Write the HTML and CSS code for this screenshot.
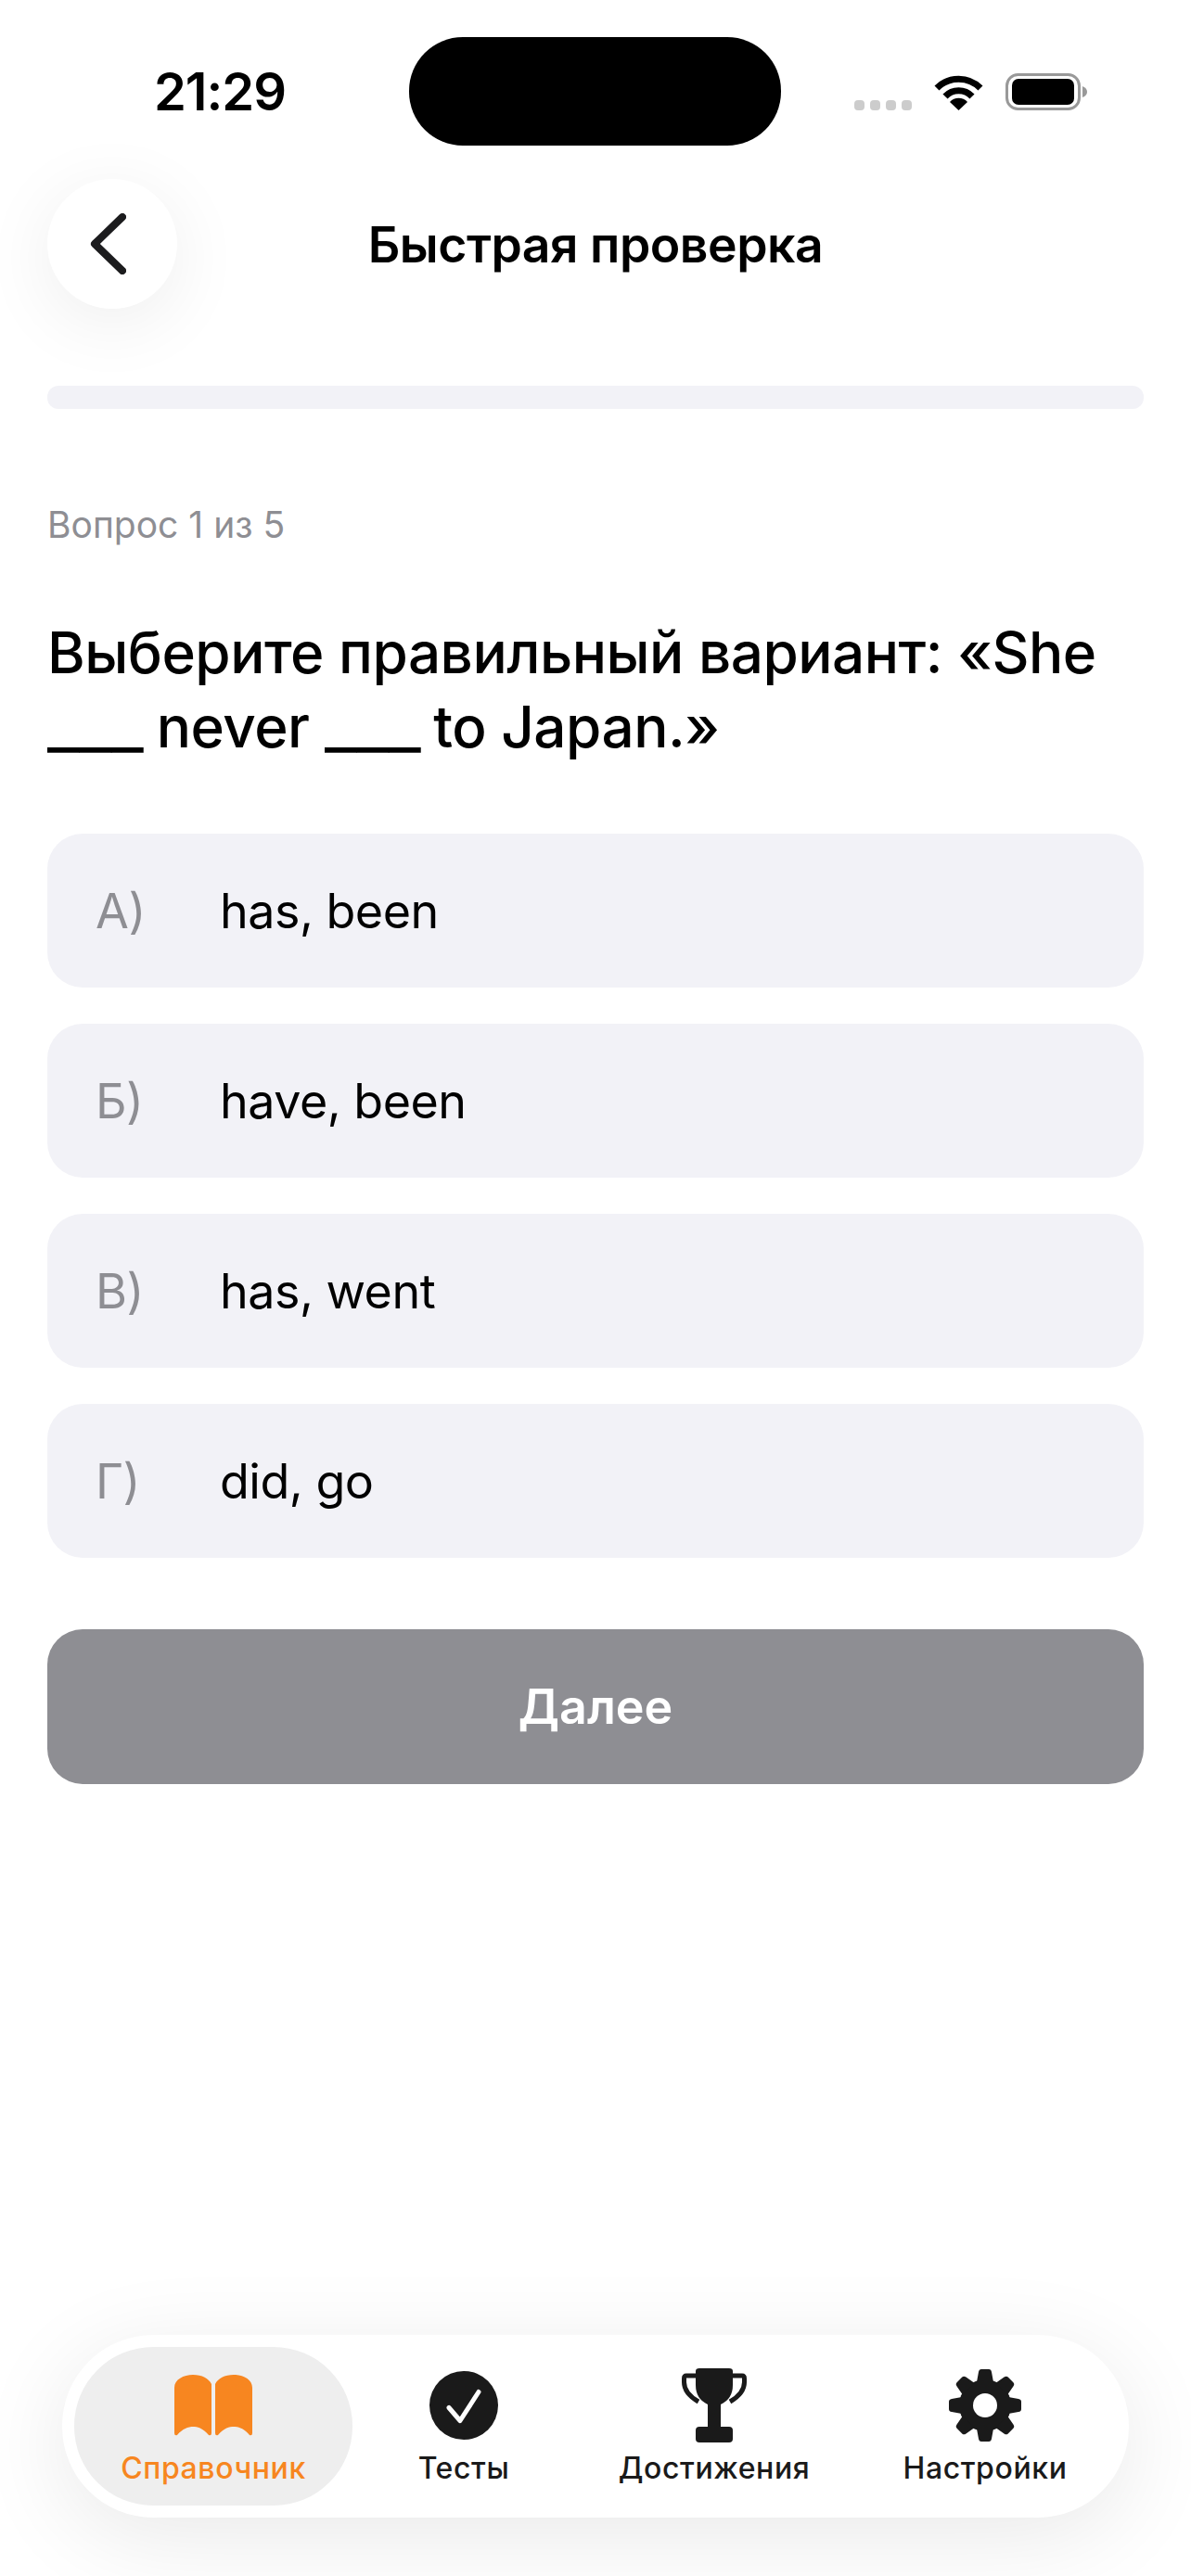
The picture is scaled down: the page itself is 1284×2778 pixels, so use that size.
FILE: index.html
```html
<!DOCTYPE html>
<html lang="ru">
<head>
    <meta charset="UTF-8">
    <meta name="viewport" content="width=device-width, initial-scale=1.0">
    <title>Быстрая проверка</title>
    <link rel="stylesheet" href="styles.css">
</head>
<body>
    <div class="page">
        <!-- Status bar -->
        <div class="status-bar">
            <span class="time">21:29</span>
            <div class="island"></div>
            <div class="status-icons">
                <div class="signal-dots"><i></i><i></i><i></i><i></i></div>
                <svg class="wifi" width="53" height="40" viewBox="0 0 53 40">
                    <path d="M3 16 A33 33 0 0 1 50 16" fill="none" stroke="#000" stroke-width="7"/>
                    <path d="M12 25 A20 20 0 0 1 41 25" fill="none" stroke="#000" stroke-width="7"/>
                    <path d="M26.5 40 L17 31 A13 13 0 0 1 36 31 Z" fill="#000"/>
                </svg>
                <svg class="battery" width="88" height="40" viewBox="0 0 88 40">
                    <rect x="1.5" y="1.5" width="78" height="37" rx="12" fill="none" stroke="#999" stroke-width="3"/>
                    <rect x="7" y="6" width="67" height="28" rx="7" fill="#000"/>
                    <path d="M83 14 Q88 16 88 20 Q88 24 83 26 Z" fill="#999"/>
                </svg>
            </div>
        </div>

        <!-- Header -->
        <header class="top-bar">
            <button class="back-btn">
                <svg width="40" height="66" viewBox="0 0 40 66">
                    <path d="M36 4 L6 33 L36 62" fill="none" stroke="#1c1c1e" stroke-width="8" stroke-linecap="round" stroke-linejoin="round"/>
                </svg>
            </button>
            <h1>Быстрая проверка</h1>
        </header>

        <div class="progress"></div>

        <!-- Question -->
        <main class="quiz">
            <p class="counter">Вопрос 1 из 5</p>
            <h2 class="question">Выберите правильный вариант: «She <span class="blank">___</span> never <span class="blank">___</span> to Japan.»</h2>
            <div class="options">
                <div class="option"><span class="letter">А)</span><span>has, been</span></div>
                <div class="option"><span class="letter">Б)</span><span>have, been</span></div>
                <div class="option"><span class="letter">В)</span><span>has, went</span></div>
                <div class="option"><span class="letter">Г)</span><span>did, go</span></div>
            </div>
            <button class="next-btn">Далее</button>
        </main>

        <!-- Tab bar -->
        <nav class="tab-bar">
            <a class="tab active">
                <svg width="84" height="66" viewBox="0 0 84 66">
                    <path d="M0 14 C0 5 10 0 20 0 C30 0 37 4 40 10 V63 Q40 66 37 65 C30 57 25 56 20 56 C15 56 9 58 3 65 Q0 66 0 63 Z" fill="#f78620"/>
                    <path d="M84 14 C84 5 74 0 64 0 C54 0 47 4 44 10 V63 Q44 66 47 65 C54 57 59 56 64 56 C69 56 75 58 81 65 Q84 66 84 63 Z" fill="#f78620"/>
                </svg>
                <span>Справочник</span>
            </a>
            <a class="tab">
                <svg width="74" height="75" viewBox="0 0 74 75">
                    <circle cx="37" cy="37.5" r="37" fill="#1a1a1a"/>
                    <path d="M21 40 L33 54 L53 23" fill="none" stroke="#fff" stroke-width="5" stroke-linecap="round" stroke-linejoin="round"/>
                </svg>
                <span>Тесты</span>
            </a>
            <a class="tab">
                <svg width="70" height="80" viewBox="0 0 70 80">
                    <path d="M15 3 Q15 0 19 0 H51 Q55 0 55 3 V18 Q55 33 42 39 V63 H28 V39 Q15 33 15 18 Z" fill="#1a1a1a"/>
                    <path d="M15 8 H5 Q2.500 8 2.500 11 V15 Q2.500 27 18 36" fill="none" stroke="#1a1a1a" stroke-width="5"/>
                    <path d="M55 8 H65 Q67.500 8 67.500 11 V15 Q67.500 27 52 36" fill="none" stroke="#1a1a1a" stroke-width="5"/>
                    <rect x="15" y="63" width="40" height="17" rx="4" fill="#1a1a1a"/>
                </svg>
                <span>Достижения</span>
            </a>
            <a class="tab">
                <svg width="78" height="78" viewBox="0 0 78 78">
                    <circle cx="39" cy="39" r="28" fill="#1a1a1a"/>
                    <g fill="#1a1a1a">
                        <path id="tooth" d="M30 14 L32 3 Q32.500 0 35 0 H43 Q45.500 0 46 3 L48 14 Z"/>
                        <use href="#tooth" transform="rotate(45 39 39)"/>
                        <use href="#tooth" transform="rotate(90 39 39)"/>
                        <use href="#tooth" transform="rotate(135 39 39)"/>
                        <use href="#tooth" transform="rotate(180 39 39)"/>
                        <use href="#tooth" transform="rotate(225 39 39)"/>
                        <use href="#tooth" transform="rotate(270 39 39)"/>
                        <use href="#tooth" transform="rotate(315 39 39)"/>
                    </g>
                    <circle cx="39" cy="39" r="13" fill="#fff"/>
                </svg>
                <span>Настройки</span>
            </a>
        </nav>
    </div>
</body>
</html>
```

FILE: styles.css
```css
/* Reset and font */
* {
    margin: 0;
    padding: 0;
    box-sizing: border-box;
    font-family: Inter, "Noto Sans", sans-serif;
}

body {
    background-color: #fff;
    color: #000;
}

.page {
    width: 1284px;
    height: 2778px;
    display: flex;
    flex-direction: column;
    overflow: hidden;
}

/* Status bar */
.status-bar {
    height: 117px;
    margin-top: 40px;
    display: grid;
    grid-template-columns: 441px 401px 1fr;
    align-items: center;
}

.time {
    font-size: 56px;
    font-weight: 600;
    text-align: center;
    padding-left: 33px;
    letter-spacing: -1px;
}

.island {
    height: 117px;
    background-color: #000;
    border-radius: 58px;
}

.status-icons {
    display: flex;
    align-items: flex-end;
    height: 40px;
    padding-left: 79px;
}

.signal-dots {
    display: flex;
    gap: 6px;
    margin-right: 24px;
}

.signal-dots i {
    display: block;
    width: 11px;
    height: 11px;
    border-radius: 4px;
    background-color: #ccc;
}

.battery {
    margin-left: 24px;
}

/* Header */
.top-bar {
    height: 140px;
    margin-top: 36px;
    padding: 0 51px;
    display: flex;
    align-items: center;
    position: relative;
}

.top-bar h1 {
    position: absolute;
    left: 0;
    right: 0;
    text-align: center;
    font-size: 53.500px;
    font-weight: 600;
    letter-spacing: -0.5px;
}

.back-btn {
    width: 140px;
    height: 140px;
    border: none;
    border-radius: 50%;
    background-color: #fff;
    box-shadow: 0 15px 80px rgba(0, 0, 0, 0.07);
    display: flex;
    align-items: center;
    justify-content: center;
    padding-right: 10px;
}

.progress {
    height: 25px;
    margin: 83px 51px 0;
    background-color: #f2f2f7;
    border-radius: 12px;
}

/* Question */
.quiz {
    padding: 0 51px;
}

.counter {
    margin-top: 103px;
    line-height: 44px;
    font-size: 39px;
    color: #8e8e93;
}

.question {
    margin-top: 76px;
    font-size: 62px;
    line-height: 80px;
    font-weight: 500;
    letter-spacing: -0.5px;
}

/* The blanks are wider here than Inter's three underscores */
.blank {
    display: inline-block;
    transform: scaleX(1.22);
    transform-origin: left;
    margin-right: 17px;
}

.options {
    margin-top: 75px;
    display: flex;
    flex-direction: column;
    gap: 39px;
}

.option {
    height: 166px;
    padding-left: 52px;
    display: flex;
    align-items: center;
    background-color: #f2f2f7;
    border-radius: 38px;
    font-size: 52px;
    letter-spacing: -0.5px;
}

.letter {
    width: 134px;
    color: #8e8e93;
}

.next-btn {
    display: block;
    width: 100%;
    height: 167px;
    margin-top: 77px;
    border: none;
    border-radius: 38px;
    background-color: #8e8e93;
    color: #fff;
    font-size: 52px;
    font-weight: 600;
}

/* Tab bar */
.tab-bar {
    margin: auto 67px 63px;
    height: 197px;
    padding: 13px;
    display: grid;
    grid-template-columns: 300px 240px 300px 1fr;
    background-color: #fff;
    border-radius: 98px;
    box-shadow: 0 20px 100px rgba(0, 0, 0, 0.09);
}

.tab {
    display: flex;
    flex-direction: column;
    align-items: center;
    height: 171px;
    padding-top: 23px;
    color: #1a1a1a;
    font-size: 32px;
    font-weight: 500;
    line-height: 40px;
    letter-spacing: 0.6px;
}

.tab svg {
    height: 80px;
    margin-bottom: 8px;
}

.tab.active {
    color: #f78620;
    background-color: #eee;
    border-radius: 85px;
}
```
